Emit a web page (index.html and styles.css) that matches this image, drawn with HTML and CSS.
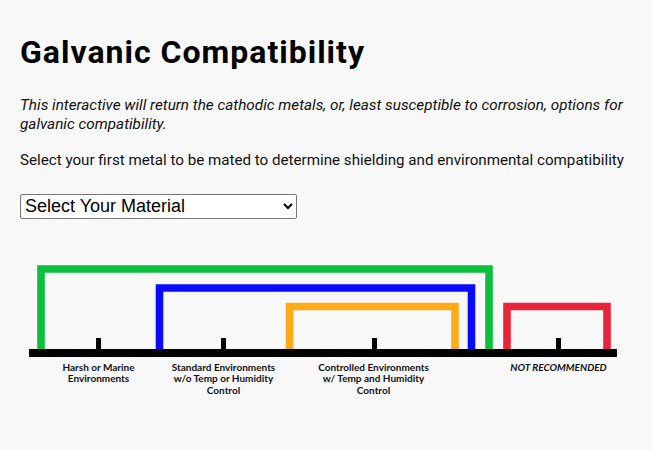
FILE: index.html
```html
<!DOCTYPE html>
<html lang="en">
<head>
<meta charset="utf-8">
<title>Galvanic Compatibility</title>
<link rel="stylesheet" href="styles.css">
</head>
<body>
<main class="page">
  <h1 class="title">Galvanic Compatibility</h1>
  <p class="intro">This interactive will return the cathodic metals, or, least susceptible to corrosion, options for galvanic compatibility.</p>
  <p class="lead">Select your first metal to be mated to determine shielding and environmental compatibility</p>
  <select class="material">
    <option>Select Your Material</option>
    <option>Aluminum</option>
    <option>Copper</option>
    <option>Nickel</option>
    <option>Stainless Steel</option>
  </select>
  <svg class="chart" viewBox="20 250 612 160" width="612" height="160" xmlns="http://www.w3.org/2000/svg">
    <g fill="none" stroke-width="7.6" stroke-linejoin="miter" stroke-linecap="butt">
      <path d="M41 349 V269 H489 V349" stroke="#0dbf3d"/>
      <path d="M159.5 349 V288 H471.5 V349" stroke="#0a0aff"/>
      <path d="M289.5 349 V306.5 H455 V349" stroke="#ffaa17"/>
      <path d="M507 349 V306.5 H607 V349" stroke="#e8243a"/>
    </g>
    <g fill="#000">
      <rect x="29" y="349" width="588" height="8"/>
      <rect x="96" y="338" width="5" height="12"/>
      <rect x="221" y="338" width="5" height="12"/>
      <rect x="372" y="338" width="5" height="12"/>
      <rect x="556" y="338" width="5" height="12"/>
    </g>
    <g class="labels" text-anchor="middle">
      <text x="98.5" y="370.7">Harsh or Marine</text>
      <text x="98.5" y="382.3">Environments</text>
      <text x="223.5" y="370.7">Standard Environments</text>
      <text x="223.5" y="382.3">w/o Temp or Humidity</text>
      <text x="223.5" y="394">Control</text>
      <text x="373.5" y="370.7">Controlled Environments</text>
      <text x="373.5" y="382.3">w/ Temp and Humidity</text>
      <text x="373.5" y="394">Control</text>
      <text class="warn" x="558.5" y="370.7">NOT RECOMMENDED</text>
    </g>
  </svg>
</main>
</body>
</html>
```
FILE: styles.css
```css
html, body {
  margin: 0;
  padding: 0;
  background: #f8f8f8;
}

.page {
  display: flex;
  flex-direction: column;
  align-items: flex-start;
  padding: 34.4px 20px 0 20px;
  font-family: Roboto, "Liberation Sans", Arial, sans-serif;
  color: #111;
}

.title {
  margin: 0 0 25.3px 0;
  font-size: 32px;
  line-height: 36px;
  font-weight: 700;
  letter-spacing: 1px;
  color: #000;
}

.intro {
  margin: 0 0 16.3px 0;
  font-size: 15.3px;
  line-height: 19.5px;
  font-style: italic;
}

.lead {
  margin: 0 0 23.5px 0;
  font-size: 15.17px;
  line-height: 19.5px;
}

.material {
  width: 277px;
  height: 25px;
  margin: 0;
  padding: 0;
  font-family: "Liberation Sans", Arial, sans-serif;
  font-size: 18px;
  color: #000;
  background: #fff;
  border: 1px solid #767676;
  border-radius: 2px;
}

.chart {
  display: block;
  margin-top: 31px;
}

.labels {
  font-family: Lato, "Liberation Sans", sans-serif;
  font-size: 10px;
  font-weight: 700;
  fill: #111;
}

.labels .warn {
  font-style: italic;
}
```
